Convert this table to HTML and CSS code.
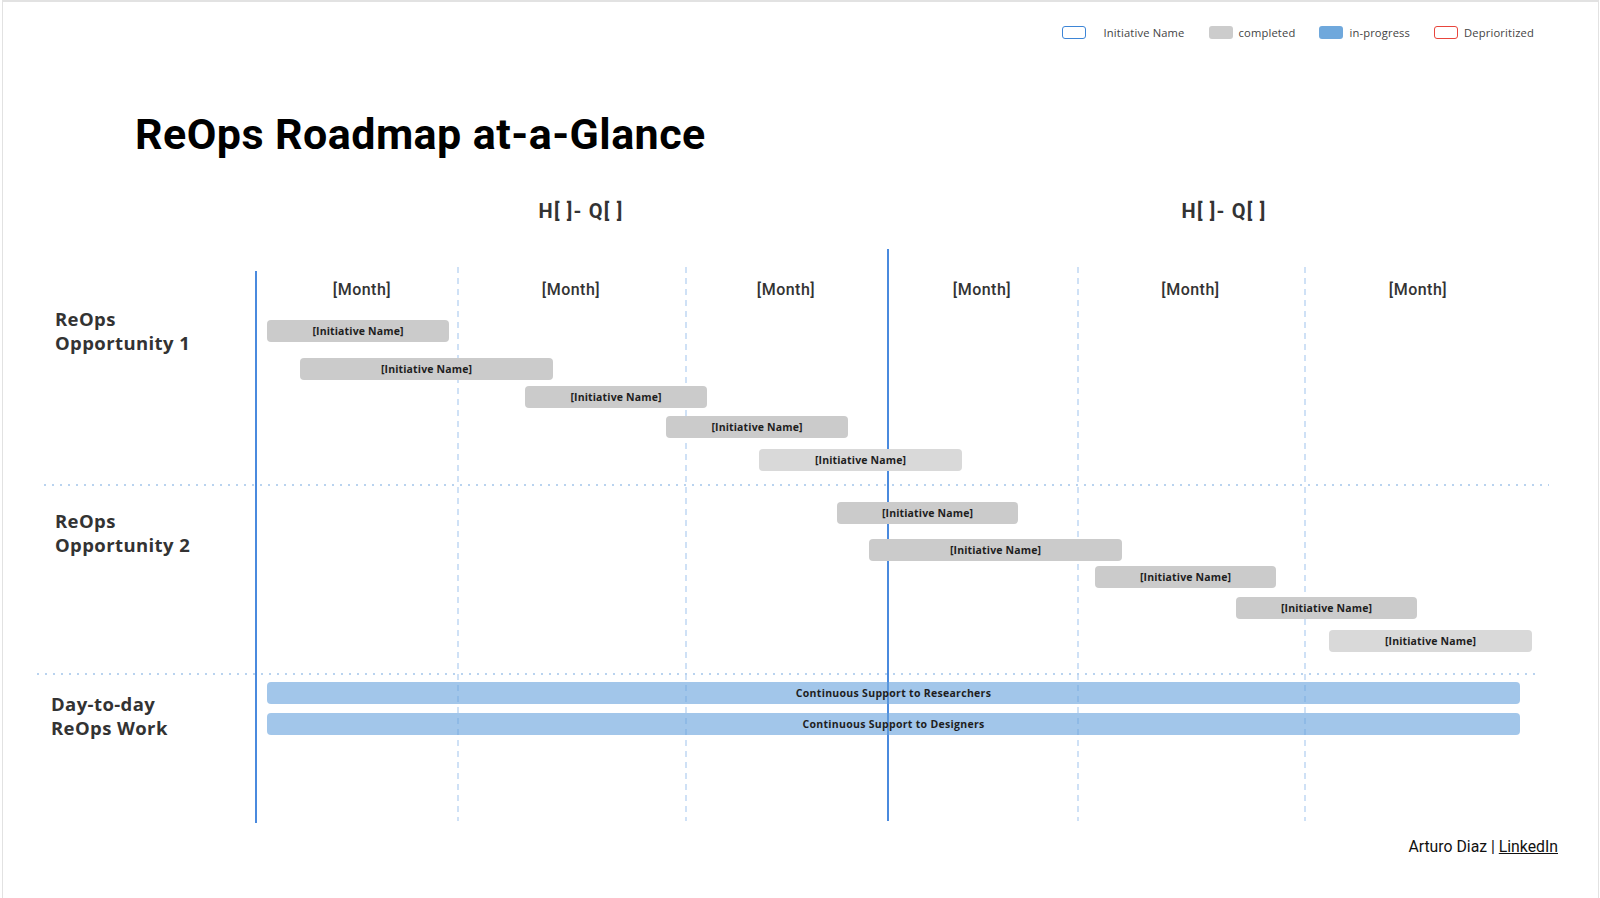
FILE: index.html
```html
<!DOCTYPE html>
<html lang="en">
<head>
<meta charset="utf-8">
<title>ReOps Roadmap at-a-Glance</title>
<link rel="stylesheet" href="styles.css">
</head>
<body>
<div class="page">
  <div class="legend">
    <div class="legend-item first"><span class="swatch outline-blue"></span><span>Initiative Name</span></div>
    <div class="legend-item"><span class="swatch fill-gray"></span><span>completed</span></div>
    <div class="legend-item"><span class="swatch fill-blue"></span><span>in-progress</span></div>
    <div class="legend-item"><span class="swatch outline-red"></span><span>Deprioritized</span></div>
  </div>

  <h1 class="title">ReOps Roadmap at-a-Glance</h1>

  <div class="halves">
    <div class="half half-1">H[ ]- Q[ ]</div>
    <div class="half half-2">H[ ]- Q[ ]</div>
  </div>

  <div class="chart">
    <div class="gridlines">
      <div class="gl"></div>
      <div class="gl solid first-solid"></div>
      <div class="gl dashed"></div>
      <div class="gl dashed"></div>
      <div class="gl solid mid-solid"></div>
      <div class="gl dashed"></div>
      <div class="gl dashed"></div>
    </div>

    <div class="content">
      <div class="months">
        <div></div>
        <div class="m-first">[Month]</div>
        <div>[Month]</div>
        <div>[Month]</div>
        <div>[Month]</div>
        <div>[Month]</div>
        <div>[Month]</div>
      </div>

      <div class="section s1">
        <div class="label">ReOps<br>Opportunity 1</div>
        <div class="track">
          <div class="bar gray" style="margin-left:12px;width:182px">[Initiative Name]</div>
          <div class="bar gray" style="margin-left:45px;width:253px">[Initiative Name]</div>
          <div class="bar gray" style="margin-left:270px;width:182px">[Initiative Name]</div>
          <div class="bar gray" style="margin-left:411px;width:182px">[Initiative Name]</div>
          <div class="bar light" style="margin-left:504px;width:203px">[Initiative Name]</div>
        </div>
      </div>
      <div class="divider d1"></div>

      <div class="section s2">
        <div class="label">ReOps<br>Opportunity 2</div>
        <div class="track">
          <div class="bar gray" style="margin-left:582px;width:181px">[Initiative Name]</div>
          <div class="bar gray" style="margin-left:614px;width:253px">[Initiative Name]</div>
          <div class="bar gray" style="margin-left:840px;width:181px">[Initiative Name]</div>
          <div class="bar gray" style="margin-left:981px;width:181px">[Initiative Name]</div>
          <div class="bar light" style="margin-left:1074px;width:203px">[Initiative Name]</div>
        </div>
      </div>
      <div class="divider d2"></div>

      <div class="section s3">
        <div class="label">Day-to-day<br>ReOps Work</div>
        <div class="track">
          <div class="bar blue" style="margin-left:12px;width:1253px">Continuous Support to Researchers</div>
          <div class="bar blue" style="margin-left:12px;width:1253px">Continuous Support to Designers</div>
        </div>
      </div>
    </div>
  </div>

  <div class="footer">Arturo Diaz | <a class="link" href="#">LinkedIn</a></div>
</div>
</body>
</html>
```

FILE: styles.css
```css
* { box-sizing: border-box; }

html, body {
  margin: 0;
  padding: 0;
  background: #ffffff;
}

body {
  font-family: "Open Sans", "Liberation Sans", sans-serif;
  color: #333333;
  overflow: hidden;
}

.page {
  margin-left: 2px;
  width: 1597px;
  height: 898px;
  border-left: 1px solid #e2e2e2;
  border-right: 1px solid #e2e2e2;
  border-top: 2px solid #e2e2e2;
  background: #ffffff;
}

/* Legend */
.legend {
  display: flex;
  justify-content: flex-end;
  align-items: center;
  gap: 24px;
  padding: 24px 64px 0 0;
  height: 37px;
  font-size: 11.2px;
  letter-spacing: 0.15px;
  color: #444444;
}

.legend-item {
  display: flex;
  align-items: center;
  gap: 6px;
  line-height: 13px;
}

.legend-item.first {
  gap: 18px;
}

.swatch {
  display: inline-block;
  width: 24px;
  height: 13px;
  border-radius: 3px;
}

.outline-blue { border: 1.5px solid #3d85d6; }
.fill-gray { background: #cccccc; }
.fill-blue { background: #6fa8dc; }
.outline-red { border: 1.5px solid #e8453c; }

/* Title */
.title {
  margin: 70px 0 0 132px;
  font-family: Roboto, "Liberation Sans", sans-serif;
  font-weight: 700;
  font-size: 43px;
  line-height: 50px;
  color: #000000;
  letter-spacing: 0.45px;
}

/* Half-year headers */
.halves {
  display: flex;
  margin-top: 40px;
  padding-left: 252px;
  height: 24px;
}

.half {
  font-family: Roboto, "Liberation Sans", sans-serif;
  font-weight: 700;
  font-size: 20px;
  line-height: 24px;
  letter-spacing: 1.2px;
  text-align: center;
  color: #333333;
}

.half-1 { width: 652px; }
.half-2 { width: 634px; }

/* Chart */
.chart {
  position: relative;
  margin: 26px 0 0 34px;
  width: 1520px;
  height: 574px;
}

.gridlines {
  position: absolute;
  inset: 0;
  display: grid;
  grid-template-columns: 218px 202px 228px 202px 190px 227px 228px;
  z-index: 0;
}

.gl { height: 100%; }

.gl.solid {
  width: 2px;
  background: #4a8ade;
}

.gl.first-solid {
  margin-top: 22px;
  height: 552px;
}

.gl.mid-solid {
  margin-top: 0;
  height: 572px;
}

.gl.dashed {
  width: 2px;
  margin-top: 18px;
  height: 554px;
  background: repeating-linear-gradient(to bottom, #cfe1f6 0 6px, transparent 6px 11px);
}

.content {
  position: relative;
  z-index: 1;
}

.months {
  display: grid;
  grid-template-columns: 218px 202px 228px 202px 190px 227px 228px;
  padding-top: 29px;
  font-family: Roboto, "Liberation Sans", sans-serif;
  font-weight: 500;
  font-size: 16px;
  line-height: 24px;
  letter-spacing: 0.5px;
  color: #333333;
}

.months > div {
  text-align: center;
}

.months > .m-first {
  padding-left: 12px;
}

.section {
  display: flex;
}

.label {
  width: 218px;
  flex: none;
  font-weight: 700;
  font-size: 18.5px;
  line-height: 24px;
  letter-spacing: 0.4px;
  color: #333333;
}

.track {
  flex: 1;
  display: flex;
  flex-direction: column;
  align-items: flex-start;
}

.bar {
  height: 22px;
  border-radius: 4px;
  font-weight: 700;
  font-size: 10.5px;
  line-height: 22px;
  letter-spacing: 0.15px;
  text-align: center;
  color: #1e1e1e;
  white-space: nowrap;
}

.bar.gray { background: #cbcbcb; }
.bar.light { background: #d9d9d9; }
.bar.blue { background: rgba(100, 160, 220, 0.6); letter-spacing: 0.3px; }

/* Section 1 */
.s1 .label { padding: 5px 0 0 18px; }
.s1 .track { padding: 18px 0 13px; }
.s1 .bar:nth-child(2) { margin-top: 16px; }
.s1 .bar:nth-child(3) { margin-top: 6px; }
.s1 .bar:nth-child(4) { margin-top: 8px; }
.s1 .bar:nth-child(5) { margin-top: 11px; }

/* Section 2 */
.s2 .label { padding: 23px 0 0 18px; }
.s2 .track { padding: 16px 0 21px; }
.s2 .bar:nth-child(2) { margin-top: 15px; }
.s2 .bar:nth-child(3) { margin-top: 5px; }
.s2 .bar:nth-child(4) { margin-top: 9px; }
.s2 .bar:nth-child(5) { margin-top: 11px; }

/* Section 3 */
.s3 .label { padding: 17px 0 0 14px; }
.s3 .track { padding: 7px 0 0; }
.s3 .bar:nth-child(2) { margin-top: 9px; }

.divider {
  height: 2px;
  background: repeating-linear-gradient(to right, #b9d3ef 0 2px, transparent 2px 8px);
}

.d1 { margin-left: 7px; width: 1505px; }
.d2 { margin-left: 0; width: 1504px; }

/* Footer */
.footer {
  margin-top: 14px;
  padding-right: 40px;
  text-align: right;
  font-family: Roboto, "Liberation Sans", sans-serif;
  font-size: 15.8px;
  line-height: 20px;
  color: #111111;
}

.link {
  color: #111111;
  text-decoration: underline;
}
```
